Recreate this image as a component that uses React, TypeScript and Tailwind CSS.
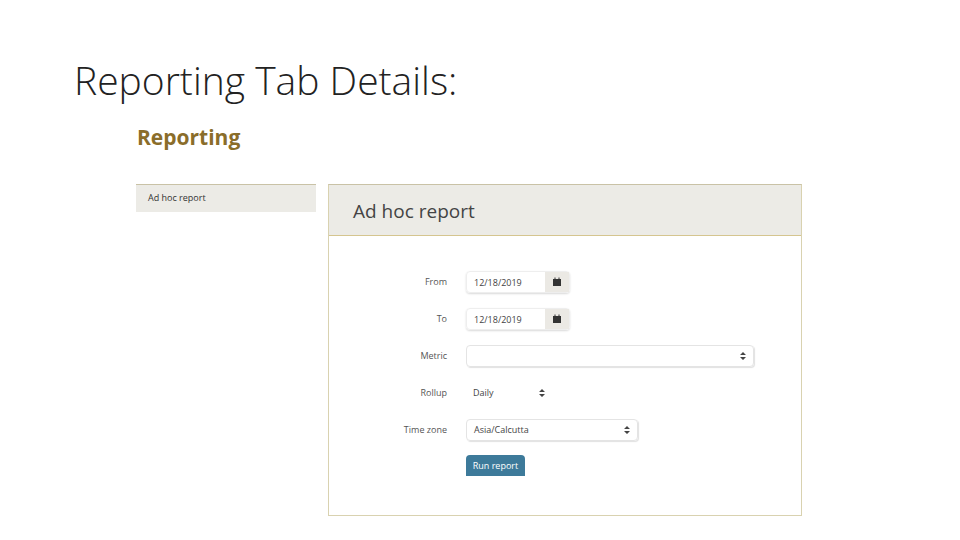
import React from "react";

const Cal = () => (
  <svg width="10" height="10" viewBox="0 0 10 10"><rect x="1" y="2" width="8" height="7" fill="#333"/><rect x="2.5" y="0.5" width="1" height="2" fill="#333"/><rect x="6.5" y="0.5" width="1" height="2" fill="#333"/></svg>
);
const Arrows = () => (
  <svg width="6" height="8" viewBox="0 0 6 8"><path d="M0 3 L3 0 L6 3Z M0 5 L3 8 L6 5Z" fill="#444"/></svg>
);

const Row = ({ label, children }: { label: string; children: React.ReactNode }) => (
  <div className="flex items-center h-[22px]">
    <div className="w-[119px] text-right text-[9px] text-[#555] pr-[1px]">{label}</div>
    <div className="ml-[18px]">{children}</div>
  </div>
);

export default function App() {
  return (
    <div className="w-[960px] h-[540px] bg-white relative overflow-hidden" style={{ fontFamily: '"Open Sans", sans-serif' }}>
      <div className="pl-[74px] pt-[54px] text-[39px] font-light text-[#222] leading-[52px]">Reporting Tab Details:</div>
      <div className="pl-[137px] mt-[16px] text-[21px] font-bold text-[#8a6d2a] leading-[30px]">Reporting</div>
      <div className="flex pl-[136px] mt-[32px] gap-[12px]">
        <div className="w-[180px] h-[28px] bg-[#ecebe6] border-t border-[#c9c2a6] text-[9px] text-[#333] pl-[12px] pt-[6px]">Ad hoc report</div>
        <div className="w-[474px] h-[332px] border border-[#d9d2b0] border-t-[#c9c2a6]">
          <div className="h-[51px] bg-[#ecebe6] border-b border-[#d5c58f] text-[19px] text-[#444] pl-[24px] pt-[12px]">Ad hoc report</div>
          <div className="flex flex-col gap-[15px] pt-[35px]">
            <Row label="From">
              <div className="flex w-[104px] h-[22px] rounded-sm shadow-[0_1px_2px_rgba(0,0,0,0.15)] border border-[#eee]">
                <div className="flex-1 text-[9px] text-[#444] pl-[7px] pt-[4px]">12/18/2019</div>
                <div className="w-[24px] bg-[#ebe9e4] flex items-center justify-center"><Cal /></div>
              </div>
            </Row>
            <Row label="To">
              <div className="flex w-[104px] h-[22px] rounded-sm shadow-[0_1px_2px_rgba(0,0,0,0.15)] border border-[#eee]">
                <div className="flex-1 text-[9px] text-[#444] pl-[7px] pt-[4px]">12/18/2019</div>
                <div className="w-[24px] bg-[#ebe9e4] flex items-center justify-center"><Cal /></div>
              </div>
            </Row>
            <Row label="Metric">
              <div className="flex items-center justify-end pr-[7px] w-[288px] h-[22px] rounded-sm border border-[#e4e4e4] shadow-[1px_1px_1px_rgba(0,0,0,0.12)]"><Arrows /></div>
            </Row>
            <Row label="Rollup">
              <div className="flex items-center justify-between px-[7px] w-[86px] h-[22px] text-[9px] text-[#444]">Daily<Arrows /></div>
            </Row>
            <Row label="Time zone">
              <div className="flex items-center justify-between px-[7px] w-[172px] h-[22px] text-[9px] text-[#444] rounded-sm border border-[#e4e4e4] shadow-[1px_1px_1px_rgba(0,0,0,0.12)]">Asia/Calcutta<Arrows /></div>
            </Row>
            <div className="flex -mt-[1px]">
              <div className="ml-[137px] w-[59px] h-[21px] bg-[#3d7a9a] text-white text-[9px] flex items-center justify-center rounded-t-sm">Run report</div>
            </div>
          </div>
        </div>
      </div>
    </div>
  );
}
